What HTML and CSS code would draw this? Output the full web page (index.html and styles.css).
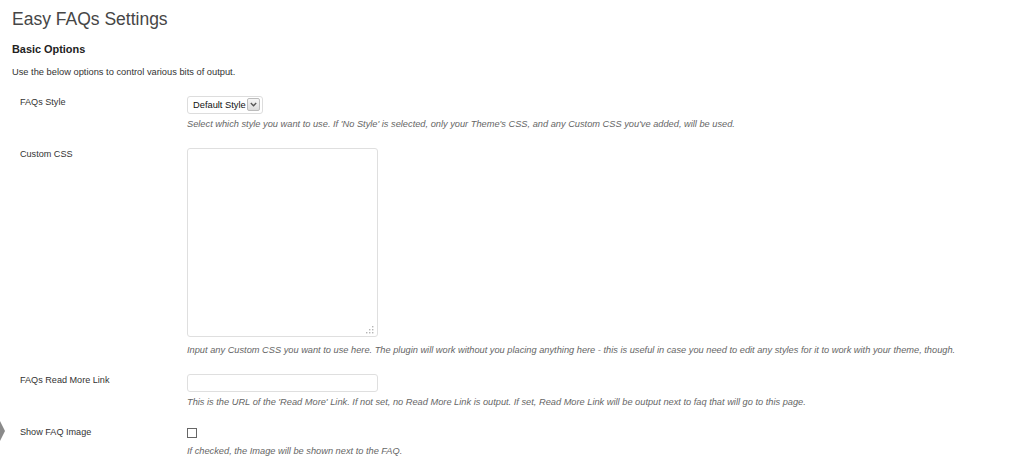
FILE: index.html
```html
<!DOCTYPE html>
<html>
<head>
<meta charset="utf-8">
<link rel="stylesheet" href="styles.css">
</head>
<body>
<div class="menu-arrow"><svg width="6" height="20" viewBox="0 0 6 20"><polygon points="0,0 5,10 0,20" fill="#8a8a8a"/></svg></div>
<div class="wrap">
  <h2 class="title">Easy FAQs Settings</h2>
  <h3 class="section">Basic Options</h3>
  <p class="intro">Use the below options to control various bits of output.</p>
  <div class="form">
    <div class="row">
      <div class="label">FAQs Style</div>
      <div class="field">
        <span class="select-wrap">
          <select class="select"><option>Default Style</option></select>
          <span class="select-arrow"><svg width="7" height="5" viewBox="0 0 7 5"><polyline points="0.8,1 3.5,3.8 6.2,1" fill="none" stroke="#555" stroke-width="1.3"/></svg></span>
        </span>
        <div class="desc">Select which style you want to use. If 'No Style' is selected, only your Theme's CSS, and any Custom CSS you've added, will be used.</div>
      </div>
    </div>
    <div class="row">
      <div class="label">Custom CSS</div>
      <div class="field">
        <span class="textarea-wrap">
          <textarea class="textarea"></textarea>
          <span class="grip"><svg width="9" height="9" viewBox="0 0 9 9" fill="#b5b5b5"><rect x="7" y="1" width="1.4" height="1.4"/><rect x="4" y="4" width="1.4" height="1.4"/><rect x="7" y="4" width="1.4" height="1.4"/><rect x="1" y="7" width="1.4" height="1.4"/><rect x="4" y="7" width="1.4" height="1.4"/><rect x="7" y="7" width="1.4" height="1.4"/></svg></span>
        </span>
        <div class="desc desc-area">Input any Custom CSS you want to use here. The plugin will work without you placing anything here - this is useful in case you need to edit any styles for it to work with your theme, though.</div>
      </div>
    </div>
    <div class="row">
      <div class="label">FAQs Read More Link</div>
      <div class="field">
        <input class="text" type="text">
        <div class="desc">This is the URL of the 'Read More' Link. If not set, no Read More Link is output. If set, Read More Link will be output next to faq that will go to this page.</div>
      </div>
    </div>
    <div class="row">
      <div class="label">Show FAQ Image</div>
      <div class="field">
        <input class="check" type="checkbox">
        <div class="desc desc-check">If checked, the Image will be shown next to the FAQ.</div>
      </div>
    </div>
  </div>
</div>
</body>
</html>
```

FILE: styles.css
```css
html, body {
  margin: 0;
  padding: 0;
  background: #ffffff;
  font-family: "Liberation Sans", Arial, sans-serif;
  color: #333333;
}

.menu-arrow {
  position: absolute;
  left: 0;
  top: 421px;
  line-height: 0;
}

.wrap {
  padding: 0 12px;
}

.title {
  margin: 0;
  padding-top: 8px;
  font-size: 17.5px;
  line-height: 22px;
  font-weight: normal;
  color: #464646;
}

.section {
  margin: 12px 0 0;
  font-size: 10.9px;
  line-height: 14px;
  font-weight: bold;
  color: #222222;
}

.intro {
  margin: 10px 0 0;
  font-size: 9.3px;
  line-height: 12px;
  color: #333333;
}

.form {
  margin-top: 18px;
  padding-left: 8px;
  display: flex;
  flex-direction: column;
  gap: 18px;
}

.row {
  display: grid;
  grid-template-columns: 167px 1fr;
}

.label {
  font-size: 9.1px;
  line-height: 12px;
  color: #333333;
}

.field {
  display: flex;
  flex-direction: column;
  align-items: flex-start;
}

.desc {
  margin-top: 4px;
  font-size: 9.25px;
  line-height: 12px;
  font-style: italic;
  color: #666666;
  white-space: nowrap;
}

.desc-area {
  margin-top: 7px;
}

.desc-check {
  margin-top: 7px;
}

.select-wrap {
  position: relative;
  display: block;
  width: 76px;
  height: 18px;
}

.select {
  -webkit-appearance: none;
  appearance: none;
  display: block;
  box-sizing: border-box;
  width: 76px;
  height: 18px;
  margin: 0;
  padding: 0 0 0 5px;
  border: 1px solid #dddddd;
  border-radius: 3px;
  background: #ffffff;
  font-family: "Liberation Sans", Arial, sans-serif;
  font-size: 9.3px;
  line-height: 16px;
  color: #111111;
  outline: none;
}

.select-arrow {
  position: absolute;
  left: 60px;
  top: 2px;
  box-sizing: border-box;
  width: 13px;
  height: 13px;
  border: 1px solid #bcbcbc;
  border-radius: 2px;
  background: linear-gradient(#f6f6f6, #dcdcdc);
  display: flex;
  align-items: center;
  justify-content: center;
}

.textarea-wrap {
  position: relative;
  display: block;
  width: 191px;
  height: 189px;
}

.textarea {
  display: block;
  box-sizing: border-box;
  width: 191px;
  height: 189px;
  margin: 0;
  padding: 2px;
  border: 1px solid #dfdfdf;
  border-radius: 3px;
  background: #ffffff;
  resize: none;
  outline: none;
}

.grip {
  position: absolute;
  right: 4px;
  bottom: 3px;
  line-height: 0;
}

.text {
  display: block;
  box-sizing: border-box;
  width: 191px;
  height: 18px;
  margin: 0;
  padding: 0 3px;
  border: 1px solid #dfdfdf;
  border-radius: 3px;
  background: #ffffff;
  outline: none;
}

.check {
  -webkit-appearance: none;
  appearance: none;
  display: block;
  box-sizing: border-box;
  width: 10px;
  height: 10px;
  margin: 2px 0 0;
  border: 1px solid #666666;
  border-radius: 0;
  background: #ffffff;
}
```
